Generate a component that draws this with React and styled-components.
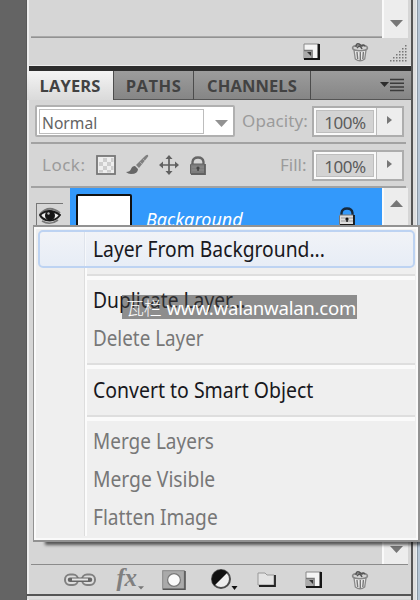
import React from "react";
import styled, { createGlobalStyle } from "styled-components";

const Global = createGlobalStyle`
  *{box-sizing:border-box}
  body{margin:0;overflow:hidden;background:#d6d6d6;font-family:"Open Sans","Noto Sans",sans-serif}
  svg{display:block;flex:none}
`;
const Screen = styled.div`position:relative;width:420px;height:600px;display:flex;background:#d6d6d6;overflow:hidden;`;
const Canvas = styled.div`width:27px;background:#646464;border-right:1px solid #5a5a5a;`;
const Dock = styled.div`width:386px;display:flex;flex-direction:column;border-left:2px solid #ededed;border-right:2px solid #555;border-image:linear-gradient(90deg,#ededed 50%,#555 50%) 2;`;
const WindowEdge = styled.div`flex:1;background:linear-gradient(90deg,#dedede 0 3px,#e9edf1 3px 4px,#8b98a5 4px 5px,#b7c6d6 5px);`;
const UpperPanel = styled.div`height:66px;display:flex;flex-direction:column;border-bottom:1px solid #ececec;`;
const UpperBody = styled.div`height:38px;display:flex;justify-content:flex-end;margin:0 3px 0 2px;`;
const EmptyList = styled.div`flex:1;border-bottom:1px solid #929292;box-shadow:inset 0 -1px #a9a9a9;`;
const ScrollTrack = styled.div`width:26px;border-left:2px solid #fafafa;background:#ededed;display:flex;justify-content:center;align-items:flex-start;padding-top:${p => p.$top || 0}px;`;
const ListScroll = styled(ScrollTrack)`flex-direction:column;justify-content:space-between;align-items:center;padding-bottom:10px;`;
const UpperTools = styled.div`height:27px;display:flex;align-items:center;padding-left:274px;`;
const Tool = styled.div`width:${p => p.$w}px;display:flex;flex:none;justify-content:center;align-items:center;`;
const GripCorner = styled.div`width:18px;margin-left:-9px;padding-top:4px;`;
const Divider = styled.div`height:5px;background:#2d2d2d;`;
const Tabs = styled.div`height:29px;display:flex;background:linear-gradient(#9c9c9c,#858585);margin-left:-2px;`;
const Tab = styled.div`
  width:${p => p.$w}px;padding-top:1px;display:flex;justify-content:center;align-items:center;
  color:#424242;font:700 16.5px/28px "Open Sans",sans-serif;letter-spacing:${p => p.$ls}px;
  border-right:1px solid #4c4c4c;border-bottom:${p => p.$active ? 0 : 1}px solid #555;
  background:${p => p.$active ? "linear-gradient(#f4f4f4,#dadada)" : "transparent"};
`;
const TabsEnd = styled.div`flex:1;display:flex;justify-content:flex-end;align-items:center;padding-right:6px;border-bottom:1px solid #555;`;
const Row = styled.div`height:${p => p.$h}px;margin:0 5px 0 2px;display:flex;align-items:center;border-bottom:2px solid #a2a2a2;`;
const BlendSelect = styled.div`width:200px;height:32px;flex:none;margin-left:4px;display:flex;background:#fff;border:2px solid #b0b0b0;border-radius:2px;align-items:center;padding-left:2px;`;
const BlendField = styled.div`width:165px;height:25px;border:1px solid #bdbdbd;padding-left:2px;font:17px/25px "Noto Sans",sans-serif;color:#646464;`;
const BlendValue = styled.span`display:block;transform:scaleX(.92);transform-origin:left center;`;
const Chevron = styled.div`flex:1;display:flex;justify-content:center;padding:5px 0 0 5px;`;
const Label = styled.div`width:${p => p.$w}px;flex:none;margin-left:${p => p.$ml}px;margin-top:-1px;color:#9b9b9b;font:17px/24px "Noto Sans",sans-serif;letter-spacing:${p => p.$ls || 0}px;white-space:nowrap;`;
const PercentBox = styled.div`width:92px;height:31px;flex:none;border:2px solid #adadad;display:flex;background:#ededed;`;
const Percent = styled.div`width:62px;border:2px solid #fafafa;outline:1px solid #bebebe;outline-offset:-3px;background:#d3d3d3;color:#5c5c5c;text-align:center;font:17px/25px "Noto Sans",sans-serif;letter-spacing:-.5px;`;
const PercentArrow = styled.div`flex:1;border-left:1px solid #bbb;display:flex;align-items:center;justify-content:center;padding-bottom:3px;`;
const LockIcons = styled.div`display:flex;width:177px;flex:none;margin-left:5px;align-items:center;gap:10px;`;
const LayerList = styled.div`height:377px;margin:0 3px 0 2px;display:flex;border-bottom:1px solid #8b8b8b;`;
const EyeCell = styled.div`width:39px;padding:15px 7px 0 5px;`;
const Eye = styled.div`height:40px;border-top:1px solid #777;border-left:1px solid #777;padding:3px 0 0 2px;`;
const Layers = styled.div`flex:1;`;
const Layer = styled.div`height:60px;background:#3399fb;display:flex;padding:6px 0 0 6px;`;
const Thumb = styled.div`width:56px;height:54px;background:#fff;border:2px solid #111;border-radius:2px;`;
const LayerName = styled.div`width:206px;padding:12px 0 0 14px;color:#fff;font:italic 18px/26px "Noto Sans",sans-serif;`;
const LayerLock = styled.div`padding-top:13px;`;
const Footer = styled.div`height:31px;display:flex;align-items:center;padding-left:27px;border-bottom:2px solid #555;margin-left:-2px;`;
const BottomStrip = styled.div`height:3px;background:#dedede;margin-left:-2px;`;
const Menu = styled.div`
  position:absolute;left:33px;top:225px;width:387px;height:317px;background:#efefef;border:solid #929292;border-width:2px 2px 2px 1px;
  padding:3px 3px 3px 4px;box-shadow:inset 0 0 0 2px #fafafa,11px 4px 3px -1px rgba(0,0,0,.6);
  clip-path:inset(0 0 -8px 0);
`;
const MenuItem = styled.div`
  height:38px;padding-left:${p => p.$hot ? 53 : 55}px;display:flex;align-items:center;white-space:nowrap;
  font:21.5px/36px "Noto Sans",sans-serif;color:${p => p.$off ? "#777" : "#181820"};
  border:${p => p.$hot ? "2px solid #bdd3f2" : "0"};border-radius:${p => p.$hot ? 5 : 0}px;
  background:${p => p.$hot ? "linear-gradient(90deg,transparent 44px,#dfe4ec 44px 45px,#f6f8fb 45px 46px,transparent 46px),linear-gradient(#f1f3f7,#e7edf6)" : "linear-gradient(90deg,transparent 46px,#ddd 46px 47px,#fbfbfb 47px 49px,transparent 49px)"};
`;
const MenuText = styled.span`transform:scaleX(${p => p.$x});transform-origin:left center;`;
const Separator = styled.div`
  height:${p => p.$h}px;display:flex;align-items:center;
  background:linear-gradient(90deg,transparent 46px,#ddd 46px 47px,#fbfbfb 47px 49px,transparent 49px);
  &::after{content:"";height:4px;flex:1;margin-left:49px;margin-top:4px;border-top:2px solid #dedede;background:#fafafa;}
`;
const Watermark = styled.div`
  position:absolute;left:122px;top:295px;width:235px;height:24px;background:rgba(60,60,60,.55);
  color:#fff;font:18.6px/26px "Noto Sans","Noto Sans CJK SC",sans-serif;padding-left:4px;white-space:nowrap;letter-spacing:-.25px;
`;
const Cjk = styled.span`font:300 18px/25px "Noto Sans CJK SC",sans-serif;margin-right:5px;`;

const Down = ({ c = "#777", w = 13 }) => <svg width={w} height="8" viewBox="0 0 13 8"><path d="M0 0H13L6.5 7Z" fill={c} /></svg>;
const Up = () => <svg width="13" height="8"><path d="M0 7H13L6.5 0Z" fill="#777" /></svg>;
const NewIcon = () => <svg width="18" height="18"><path d="M1 1H16V16H1Z" fill="#f4f4f4" stroke="#888" /><path d="M14.5 1H17V17H1V15H14.5Z" fill="#161616" /><path d="M1 8H8V15H1Z" fill="#aaa" /><path d="M1 7.5H9V15" fill="none" stroke="#777" strokeWidth="1.6" /><path d="M4 9H8V13Z" fill="#333" /></svg>;
const Trash = () => <svg width="18" height="20"><path d="M3 8L4.3 17Q9 20.5 13.7 17L15 8Z" fill="#e9e9e9" stroke="#888" strokeWidth="1.3" /><ellipse cx="9" cy="6" rx="7.5" ry="2.7" fill="#d4d4d4" stroke="#888" strokeWidth="1.5" /><path d="M5 5Q5 1 8 2L11 4Q12 2 14 4M6 6Q9 2 11 7" fill="none" stroke="#555" strokeWidth="1.5" /><path d="M6 10L6.7 17M9.3 10V18M12.4 10L11.8 17" stroke="#777" strokeWidth="1.4" /></svg>;
const Grip = () => <svg width="18" height="18" fill="#777">{[0, 1, 2, 3, 4, 5].flatMap(r => Array.from({ length: r + 1 }, (_, i) => <rect key={`${r}-${i}`} x={15 - i * 3} y={r * 3} width="1.5" height="1.5" />))}</svg>;
const PanelMenu = () => <svg width="25" height="14"><path d="M0 4H9L4.5 9Z" fill="#2d2d2d" /><path d="M10 1.5H24M10 5.2H24M10 8.9H24M10 12.6H24" stroke="#3b3b3b" strokeWidth="1.5" /></svg>;
const Right = () => <svg width="7" height="10"><path d="M1 1L6 5L1 9Z" fill="#777" /></svg>;
const Checker = () => <svg width="20" height="20"><rect x="1" y="1" width="18" height="18" fill="#eee" stroke="#777" strokeWidth="1.8" />{[[7, 3], [3, 7], [11, 7], [7, 11], [3, 15], [11, 15], [15, 3], [15, 11]].map(([x, y]) => <rect key={x + "," + y} x={x} y={y} width={x === 15 ? 2.5 : 4} height={y === 15 ? 2.5 : 4} fill="#cdcdcd" />)}</svg>;
const Brush = () => <svg width="23" height="22"><path d="M22 1Q21 0 18 3L10 11L13 14L21 4Q23 2 22 1Z" fill="#808080" /><path d="M9 12L12 15Q12 20 5 20Q2 20 0 18Q4 18 5 15Q6 12 9 12Z" fill="#666" /><path d="M14 8L16 10M17 5L19 7" stroke="#aaa" /></svg>;
const Move = () => <svg width="20" height="20"><path d="M10 2V18M2 10H18" stroke="#606060" strokeWidth="1.7" /><path d="M10 0L13.5 4H6.5ZM10 20L13.5 16H6.5ZM0 10L4 6.5V13.5ZM20 10L16 6.5V13.5Z" fill="#606060" /></svg>;
const Lock = ({ light }) => <svg width="18" height="19"><path d="M3.5 9V6Q4 1.5 9 1.5Q14 1.5 14.5 6V9" fill="none" stroke={light ? "#15283c" : "#666"} strokeWidth="2.3" /><rect x="1.5" y="8" width="14" height="10" rx="1" fill={light ? "#ddd" : "#7c7c7c"} stroke={light ? "#777" : "#626262"} /><path d="M16 8V18H2" fill="none" stroke={light ? "#161616" : "#626262"} strokeWidth="1.8" /><path d="M3 11H15M3 14H15" stroke={light ? "#999" : "#8b8b8b"} /><circle cx="9" cy="12" r="1.6" fill={light ? "#111" : "#444"} /><path d="M8.3 12H9.8V15H8.3Z" fill={light ? "#222" : "#444"} /></svg>;
const EyeIcon = () => <svg width="22" height="19"><path d="M1 7Q10-3 21 6" fill="none" stroke="#777" strokeWidth="1.8" /><path d="M1 8Q10 0 21 8Q16 15 7 13Q3 12 1 8Z" fill="#eee" stroke="#1c1c1c" strokeWidth="1.9" /><circle cx="11" cy="8.5" r="5" fill="#151515" /><circle cx="9.5" cy="6.5" r="1.2" fill="#bbb" /><path d="M3 14Q11 19 19 13" fill="none" stroke="#777" strokeWidth="1.6" /></svg>;
const Chain = () => <svg width="32" height="14"><rect x="1" y="1.5" width="13" height="10.5" rx="5" fill="#ddd" stroke="#808080" strokeWidth="2" /><rect x="18" y="1.5" width="13" height="10.5" rx="5" fill="#ddd" stroke="#808080" strokeWidth="2" /><path d="M6 6.8H26" stroke="#666" strokeWidth="4.5" strokeLinecap="round" /><path d="M8 6.5H24" stroke="#e4e4e4" strokeWidth="2" /></svg>;
const Fx = styled.div`font:italic 700 25px/20px "Liberation Serif",serif;letter-spacing:-.3px;color:#808080;margin-top:-3px;`;
const FxDown = styled.div`margin:17px 0 0 1px;`;
const Mask = () => <svg width="24" height="20"><rect x=".7" y=".7" width="21.6" height="18.6" fill="#aaa" stroke="#888" /><path d="M23 1V19.3H1" fill="none" stroke="#555" strokeWidth="1.6" /><circle cx="12" cy="10" r="6.4" fill="#fafafa" stroke="#777" strokeWidth="1.2" /></svg>;
const Adjust = () => <svg width="27" height="22"><circle cx="10" cy="10" r="9" fill="#eee" stroke="#4c4c4c" strokeWidth="2" /><path d="M3.5 16.5A9 9 0 0 1 16.5 3.5Z" fill="#111" /><path d="M20.5 17H26.5L23.5 21Z" fill="#111" /></svg>;
const Folder = () => <svg width="20" height="17"><path d="M1 14V2H8L10 4H17V14Z" fill="#e3e3e3" stroke="#999" /><path d="M18 4V15H2" fill="none" stroke="#222" strokeWidth="1.8" /></svg>;

export default function App() {
  return <><Global /><Screen>
    <Canvas />
    <Dock>
      <UpperPanel>
        <UpperBody><EmptyList /><ScrollTrack $top={20}><Down /></ScrollTrack></UpperBody>
        <UpperTools><Tool $w={18}><NewIcon /></Tool><Tool $w={78}><Trash /></Tool><GripCorner><Grip /></GripCorner></UpperTools>
      </UpperPanel>
      <Divider />
      <Tabs><Tab $active $w={87} $ls={.1}>LAYERS</Tab><Tab $w={80} $ls={.5}>PATHS</Tab><Tab $w={117} $ls={.1}>CHANNELS</Tab><TabsEnd><PanelMenu /></TabsEnd></Tabs>
      <Row $h={44}><BlendSelect><BlendField><BlendValue>Normal</BlendValue></BlendField><Chevron><Down c="#929292" /></Chevron></BlendSelect><Label $w={70} $ml={7} $ls={.1}>Opacity:</Label><PercentBox><Percent>100%</Percent><PercentArrow><Right /></PercentArrow></PercentBox></Row>
      <Row $h={44}><Label $w={49} $ml={11} $ls={.5}>Lock:</Label><LockIcons><Checker /><Brush /><Move /><Lock /></LockIcons><Label $w={32} $ml={7}>Fill:</Label><PercentBox><Percent>100%</Percent><PercentArrow><Right /></PercentArrow></PercentBox></Row>
      <LayerList><EyeCell><Eye><EyeIcon /></Eye></EyeCell><Layers><Layer><Thumb /><LayerName>Background</LayerName><LayerLock><Lock light /></LayerLock></Layer></Layers><ListScroll $top={12}><Up /><Down /></ListScroll></LayerList>
      <Footer>
        <Tool $w={52}><Chain /></Tool><Tool $w={48}><Fx>fx</Fx><FxDown><Down c="#777" w={6} /></FxDown></Tool><Tool $w={39}><Mask /></Tool><Tool $w={63}><Adjust /></Tool><Tool $w={21}><Folder /></Tool><Tool $w={74}><NewIcon /></Tool><Tool $w={18}><Trash /></Tool>
      </Footer>
      <BottomStrip />
    </Dock>
    <WindowEdge />
    <Menu>
      <MenuItem $hot><MenuText $x={.896}>Layer From Background...</MenuText></MenuItem><Separator $h={13} />
      <MenuItem><MenuText $x={.895}>Duplicate Layer...</MenuText></MenuItem><MenuItem $off><MenuText $x={.876}>Delete Layer</MenuText></MenuItem><Separator $h={14} />
      <MenuItem><MenuText $x={.905}>Convert to Smart Object</MenuText></MenuItem><Separator $h={13} />
      <MenuItem $off><MenuText $x={.883}>Merge Layers</MenuText></MenuItem><MenuItem $off><MenuText $x={.896}>Merge Visible</MenuText></MenuItem><MenuItem $off><MenuText $x={.89}>Flatten Image</MenuText></MenuItem>
    </Menu>
    <Watermark><Cjk>瓦栏</Cjk>www.walanwalan.com</Watermark>
  </Screen></>;
}
